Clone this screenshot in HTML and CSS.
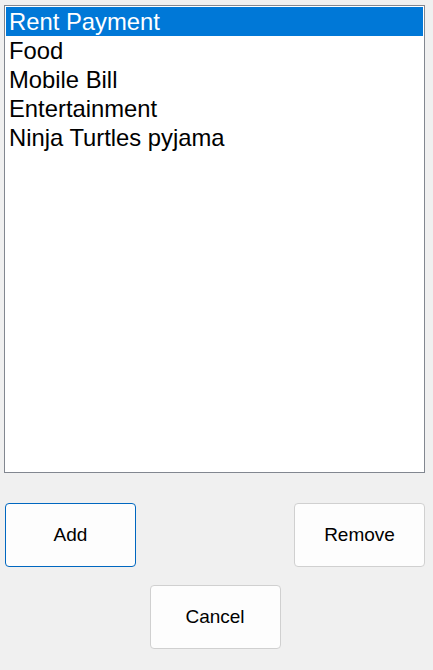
FILE: index.html
```html
<!DOCTYPE html>
<html>
<head>
<meta charset="utf-8">
<link rel="stylesheet" href="styles.css">
</head>
<body>
<div class="window">
  <div class="listbox">
    <div class="item selected">Rent Payment</div>
    <div class="item">Food</div>
    <div class="item">Mobile Bill</div>
    <div class="item">Entertainment</div>
    <div class="item">Ninja Turtles pyjama</div>
  </div>
  <div class="row">
    <button class="btn focused">Add</button>
    <button class="btn">Remove</button>
  </div>
  <div class="row center">
    <button class="btn">Cancel</button>
  </div>
</div>
</body>
</html>
```

FILE: styles.css
```css
html, body {
  margin: 0;
  padding: 0;
  background: #f0f0f0;
  font-family: "Liberation Sans", Arial, sans-serif;
}
.window {
  width: 433px;
  height: 670px;
  padding: 5px 0 0 4px;
  box-sizing: border-box;
}
.listbox {
  width: 421px;
  height: 468px;
  box-sizing: border-box;
  border: 1px solid #828790;
  background: #ffffff;
  padding: 1px;
}
.item {
  height: 29px;
  line-height: 29px;
  font-size: 23.8px;
  padding-left: 3px;
  color: #000000;
  white-space: nowrap;
}
.item.selected {
  background: #0078d7;
  color: #ffffff;
}
.row {
  display: flex;
  justify-content: space-between;
  width: 420px;
  margin-left: 1px;
  margin-top: 30px;
}
.row.center {
  justify-content: center;
  margin-top: 18px;
  margin-left: 1px;
}
.btn {
  width: 131px;
  height: 64px;
  box-sizing: border-box;
  background: #fdfdfd;
  border: 1px solid #d0d0d0;
  border-radius: 4px;
  font-family: "Liberation Sans", Arial, sans-serif;
  font-size: 19px;
  color: #000000;
  padding: 0;
}
.btn.focused {
  border-color: #0067c0;
}
```
